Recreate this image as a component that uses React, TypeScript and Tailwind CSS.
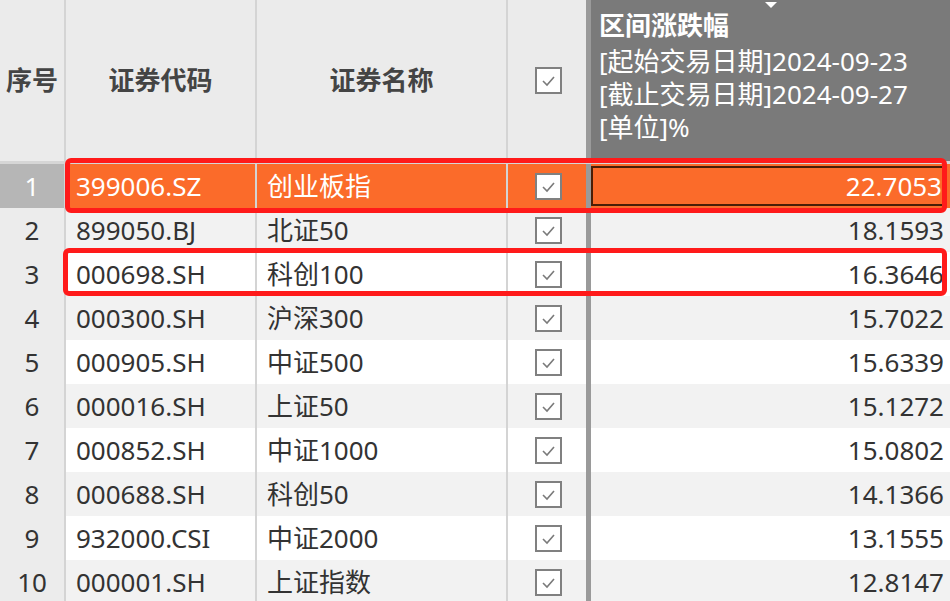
import React from "react"

const rows = [
  { code: "399006.SZ", name: "创业板指", value: "22.7053" },
  { code: "899050.BJ", name: "北证50", value: "18.1593" },
  { code: "000698.SH", name: "科创100", value: "16.3646" },
  { code: "000300.SH", name: "沪深300", value: "15.7022" },
  { code: "000905.SH", name: "中证500", value: "15.6339" },
  { code: "000016.SH", name: "上证50", value: "15.1272" },
  { code: "000852.SH", name: "中证1000", value: "15.0802" },
  { code: "000688.SH", name: "科创50", value: "14.1366" },
  { code: "932000.CSI", name: "中证2000", value: "13.1555" },
  { code: "000001.SH", name: "上证指数", value: "12.8147" },
]

function CheckBox() {
  return (
    <div className="w-[27px] h-[27px] border-2 border-[#808080] bg-white flex items-center justify-center">
      <svg width="17" height="17" viewBox="0 0 17 17" fill="none">
        <path d="M3 9l4 4 7-8" stroke="#7a7a7a" strokeWidth="1.6" />
      </svg>
    </div>
  )
}

export default function App() {
  return (
    <div
      className="relative w-[950px] h-[601px] overflow-hidden bg-white text-[26px] text-[#333]"
      style={{ fontFamily: '"Noto Sans", "Noto Sans CJK SC", sans-serif' }}
    >
      {/* header */}
      <div className="flex h-[164px] bg-[#ebebeb] border-b-[3px] border-[#d6d6d6]">
        <div className="w-[66px] shrink-0 border-r-2 border-[#d4d4d4] flex items-center justify-center font-bold text-[#444]">
          序号
        </div>
        <div className="w-[191px] shrink-0 border-r-2 border-[#d4d4d4] flex items-center justify-center font-bold text-[#444]">
          证券代码
        </div>
        <div className="w-[251px] shrink-0 border-r-2 border-[#d4d4d4] flex items-center justify-center font-bold text-[#444]">
          证券名称
        </div>
        <div className="w-[78px] shrink-0 flex items-center justify-center pl-[3px]">
          <CheckBox />
        </div>
        <div className="w-[5px] shrink-0 bg-[#9a9a9a]" />
        <div className="relative flex-1 bg-[#7a7a7a] text-white pl-[8px] pt-[5px] leading-[33px]">
          <div className="absolute left-[174px] top-[2px] w-0 h-0 border-l-[6px] border-r-[6px] border-t-[6px] border-l-transparent border-r-transparent border-t-white" />
          <div className="font-bold leading-[40px]">区间涨跌幅</div>
          <div>[起始交易日期]2024-09-23</div>
          <div>[截止交易日期]2024-09-27</div>
          <div>[单位]%</div>
        </div>
      </div>

      {/* rows */}
      {rows.map((r, i) => {
        const sel = i === 0
        const bg = sel ? "bg-[#fb6b2a]" : i % 2 === 1 ? "bg-[#f2f2f2]" : "bg-white"
        const txt = sel ? "text-white" : "text-[#333]"
        return (
          <div key={i} className={`flex h-[44px] ${bg} ${txt}`}>
            <div
              className={`w-[66px] shrink-0 border-r-2 border-[#d4d4d4] flex items-center justify-center ${
                sel ? "bg-[#b6b6b6] text-white" : "bg-[#ececec] text-[#333]"
              }`}
            >
              {i + 1}
            </div>
            <div className="w-[191px] shrink-0 border-r-2 border-[#d4d4d4] flex items-center pl-[10px]">
              {r.code}
            </div>
            <div className="w-[251px] shrink-0 border-r-2 border-[#d4d4d4] flex items-center pl-[10px]">
              {r.name}
            </div>
            <div className="w-[78px] shrink-0 flex items-center justify-center pl-[3px]">
              <CheckBox />
            </div>
            <div className="w-[5px] shrink-0 bg-[#9a9a9a]" />
            <div className="flex-1 flex items-center py-[2px] pr-[3px]">
              <div
                className={`flex-1 h-full flex items-center justify-end pr-[3px] ${
                  sel ? "border-2 border-[#4a1e06]" : ""
                }`}
              >
                {r.value}
              </div>
            </div>
          </div>
        )
      })}

      {/* red annotation boxes */}
      <div className="absolute left-[65px] top-[158px] w-[882px] h-[55px] border-[5px] border-[#ff1a1a] rounded-[6px]" />
      <div className="absolute left-[63px] top-[248px] w-[884px] h-[48px] border-[5px] border-[#ff1a1a] rounded-[6px]" />
    </div>
  )
}
